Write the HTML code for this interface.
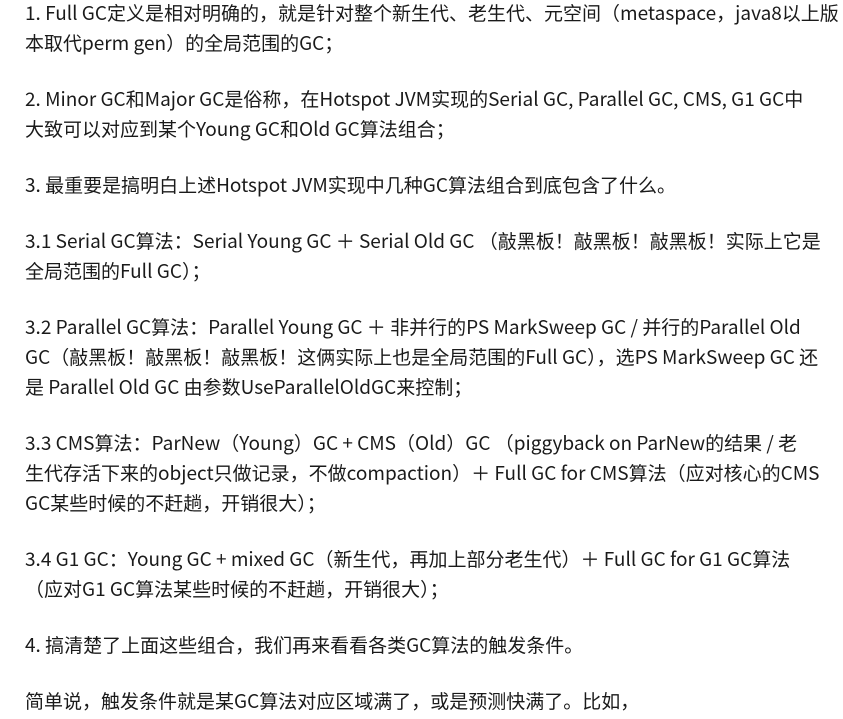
<!DOCTYPE html>
<html><head><meta charset="utf-8"><style>
html,body{margin:0;padding:0;background:#fff;width:843px;height:719px;overflow:hidden}
body{font-family:"Noto Sans CJK SC","Liberation Sans",sans-serif;font-size:19px;color:#1a1a1a;padding:0 0 0 25px;box-sizing:border-box}
p{margin:0 0 26px 0;line-height:30px;white-space:nowrap}
.w{margin-top:-2px}
</style></head><body><div class="w">
<p>1. Full GC定义是相对明确的，就是针对整个新生代、老生代、元空间（metaspace，java8以上版<br>本取代perm gen）的全局范围的GC；</p>
<p>2. Minor GC和Major GC是俗称，在Hotspot JVM实现的Serial GC, Parallel GC, CMS, G1 GC中<br>大致可以对应到某个Young GC和Old GC算法组合；</p>
<p>3. 最重要是搞明白上述Hotspot JVM实现中几种GC算法组合到底包含了什么。</p>
<p>3.1 Serial GC算法：Serial Young GC ＋ Serial Old GC （敲黑板！敲黑板！敲黑板！实际上它是<br>全局范围的Full GC）；</p>
<p>3.2 Parallel GC算法：Parallel Young GC ＋ 非并行的PS MarkSweep GC / 并行的Parallel Old<br>GC（敲黑板！敲黑板！敲黑板！这俩实际上也是全局范围的Full GC），选PS MarkSweep GC 还<br>是 Parallel Old GC 由参数UseParallelOldGC来控制；</p>
<p>3.3 CMS算法：ParNew（Young）GC + CMS（Old）GC （piggyback on ParNew的结果 / 老<br>生代存活下来的object只做记录，不做compaction）＋ Full GC for CMS算法（应对核心的CMS<br>GC某些时候的不赶趟，开销很大）；</p>
<p>3.4 G1 GC：Young GC + mixed GC（新生代，再加上部分老生代）＋ Full GC for G1 GC算法<br>（应对G1 GC算法某些时候的不赶趟，开销很大）；</p>
<p>4. 搞清楚了上面这些组合，我们再来看看各类GC算法的触发条件。</p>
<p>简单说，触发条件就是某GC算法对应区域满了，或是预测快满了。比如，</p>
</div></body></html>
